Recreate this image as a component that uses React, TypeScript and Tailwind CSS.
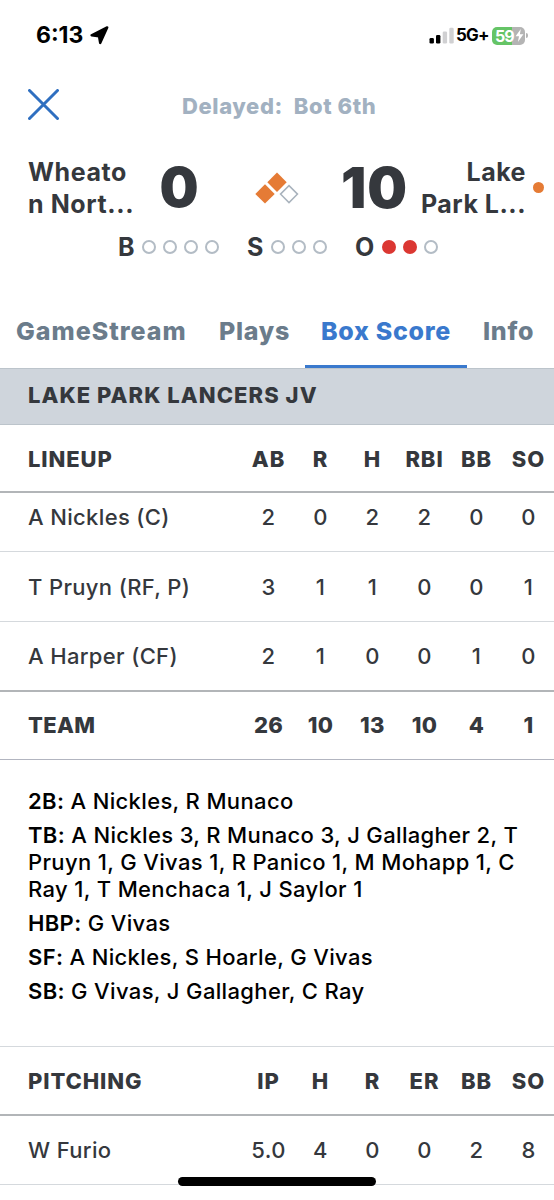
import React from 'react';

interface StatRow {
  name: string;
  stats: string[];
}

interface Note {
  label: string;
  text: string;
}

const battingColumns = ['AB', 'R', 'H', 'RBI', 'BB', 'SO'];

const lineup: StatRow[] = [
  { name: 'A Nickles (C)', stats: ['2', '0', '2', '2', '0', '0'] },
  { name: 'T Pruyn (RF, P)', stats: ['3', '1', '1', '0', '0', '1'] },
  { name: 'A Harper (CF)', stats: ['2', '1', '0', '0', '1', '0'] },
];

const teamTotals = ['26', '10', '13', '10', '4', '1'];

const notes: Note[] = [
  { label: '2B:', text: 'A Nickles, R Munaco' },
  {
    label: 'TB:',
    text: 'A Nickles 3, R Munaco 3, J Gallagher 2, T Pruyn 1, G Vivas 1, R Panico 1, M Mohapp 1, C Ray 1, T Menchaca 1, J Saylor 1',
  },
  { label: 'HBP:', text: 'G Vivas' },
  { label: 'SF:', text: 'A Nickles, S Hoarle, G Vivas' },
  { label: 'SB:', text: 'G Vivas, J Gallagher, C Ray' },
];

const pitchingColumns = ['IP', 'H', 'R', 'ER', 'BB', 'SO'];

const StatusBar = () => (
  <div className="flex h-[71px] items-center justify-between pl-[36px] pr-[26px] text-black">
    <div className="flex items-center gap-[7px]">
      <span className="text-[23px] font-bold leading-none">6:13</span>
      <svg width="19" height="19" viewBox="0 0 19 19">
        <path
          d="M17.2 1.4 L10.2 17 L9 10.2 L1.6 9.2 Z"
          fill="#000"
          stroke="#000"
          strokeWidth="2.4"
          strokeLinejoin="round"
        />
      </svg>
    </div>
    <div className="flex items-center">
      <svg width="26" height="17" viewBox="0 0 26 17">
        <rect x="0.5" y="11" width="4.4" height="5.5" rx="1.3" fill="#000" />
        <rect x="7" y="8" width="4.4" height="8.5" rx="1.3" fill="#000" />
        <rect x="13.7" y="4.5" width="4.4" height="12" rx="1.3" fill="#d0d0d2" />
        <rect x="20.3" y="0.8" width="4.4" height="15.7" rx="1.3" fill="#d0d0d2" />
      </svg>
      <span className="ml-[1px] w-[36px] text-[17px] font-bold leading-none tracking-[-0.8px]">5G+</span>
      <div className="flex h-[18px] w-[33px] items-center overflow-hidden rounded-[5px] bg-linear-to-r from-[#65c466] from-60% to-[#b4b4b4] to-60% pl-[3px]">
        <span className="text-[16px] font-bold leading-none tracking-[-1px] text-white">59</span>
        <svg className="ml-[1px] shrink-0" width="9" height="13" viewBox="0 0 9 13">
          <path d="M5.8 0 L0.6 7.3 H4 L2.9 13 L8.4 5.3 H4.9 Z" fill="#fff" />
        </svg>
      </div>
      <div className="ml-[1px] h-[5px] w-[2px] rounded-r-full bg-[#b4b4b4]" />
    </div>
  </div>
);

const Count = ({ label, total, filled = 0 }: { label: string; total: number; filled?: number }) => (
  <div className="flex items-center">
    <span className={label === 'O' ? 'w-[27px] text-[25px] font-bold leading-none' : 'w-[24px] text-[25px] font-bold leading-none'}>
      {label}
    </span>
    <div className="flex gap-[7px]">
      {Array.from({ length: total }, (_, i) => (
        <span
          key={i}
          className={
            i < filled
              ? 'h-[14px] w-[14px] rounded-full bg-[#db3732]'
              : 'h-[14px] w-[14px] rounded-full border-2 border-[#b3bcc5]'
          }
        />
      ))}
    </div>
  </div>
);

const Bases = () => (
  <svg width="46" height="34" viewBox="0 0 46 34">
    <path d="M22 1.5 L31.7 11.2 L22 20.9 L12.3 11.2 Z" fill="#e57b35" />
    <path d="M10 13.2 L19.7 22.9 L10 32.6 L0.3 22.9 Z" fill="#e57b35" />
    <path d="M34 14.6 L42.5 23.1 L34 31.6 L25.5 23.1 Z" fill="#fff" stroke="#a9b3bd" strokeWidth="1.5" />
  </svg>
);

const Scoreboard = () => (
  <div className="text-[#35383d]">
    <div className="flex h-[97px] items-center">
      <div className="w-[130px] pl-[28px] text-[25px] font-bold leading-[32px] tracking-[0.6px]">
        <div className="whitespace-nowrap">Wheato</div>
        <div className="whitespace-nowrap">n Nort...</div>
      </div>
      <div className="w-[98px] text-center text-[55px] font-black leading-none">0</div>
      <div className="w-[100px] pl-[27px]">
        <Bases />
      </div>
      <div className="w-[92px] pl-px text-center text-[56px] font-black leading-none tracking-[1px]">10</div>
      <div className="w-[106px] whitespace-nowrap text-right text-[25px] font-bold leading-[32px] tracking-[0.5px]">
        <div>Lake</div>
        <div>Park L...</div>
      </div>
      <div className="ml-[7px] h-[11px] w-[11px] rounded-full bg-[#e57b35]" />
    </div>
    <div className="flex h-[21px] items-center gap-[28px] pl-[118px] pt-px">
      <Count label="B" total={4} />
      <Count label="S" total={3} />
      <Count label="O" total={3} filled={2} />
    </div>
  </div>
);

const Tabs = () => (
  <nav className="flex h-[74px] whitespace-nowrap text-[25px] font-extrabold leading-[74px] tracking-[0.7px] text-[#6b7c8b]">
    <div className="w-[202px] pl-[16px] tracking-[1px]">GameStream</div>
    <div className="w-[103px] pl-[17px]">Plays</div>
    <div className="w-[162px] border-b-[3px] border-[#3a79cd] text-center text-[#3a79cd]">Box Score</div>
    <div className="pl-[16px]">Info</div>
  </nav>
);

const StatCells = ({ values }: { values: string[] }) => (
  <>
    {values.map((value, i) => (
      <div key={i} className="w-[52px] pl-px text-center">
        {value}
      </div>
    ))}
  </>
);

const App: React.FC = () => {
  return (
    <div className="relative h-[1200px] w-[554px] overflow-hidden bg-white font-['Inter',sans-serif] text-[22px] text-[#35383d]">
      <StatusBar />

      {/* Title */}
      <div className="flex h-[68px] items-center">
        <svg className="ml-[28px]" width="32" height="32" viewBox="0 0 32 32">
          <path d="M1.5 1.5 L29.5 29.5 M29.5 1.5 L1.5 29.5" stroke="#2f6fc0" strokeWidth="3" strokeLinecap="round" />
        </svg>
        <div className="ml-[122px] whitespace-pre pt-[2px] font-extrabold tracking-[0.6px] text-[#a2b1c1]">Delayed:  Bot 6th</div>
      </div>

      <Scoreboard />

      <div className="h-[37px]" />
      <Tabs />

      {/* Box score */}
      <div className="flex h-[57px] items-center border-y border-[#bcc4cb] bg-[#cfd5dc] pb-[3px] pl-[28px] font-extrabold tracking-[1.05px]">
        LAKE PARK LANCERS JV
      </div>

      <div className="flex h-[68px] items-center border-b-2 border-[#b2b5b8] pl-[28px] pt-[2px] font-extrabold tracking-[0.9px]">
        <div className="flex-1">LINEUP</div>
        <StatCells values={battingColumns} />
      </div>

      <div className="flex h-[199px] flex-col justify-end overflow-hidden">
        {lineup.map((row) => (
          <div
            key={row.name}
            className="flex h-[69.5px] shrink-0 items-center border-b border-[#d5d9dd] pl-[28px] pt-[2px] font-medium tracking-[0.35px] last:h-[70.5px] last:border-b-2 last:border-[#b2b5b8]"
          >
            <div className="flex-1">{row.name}</div>
            <StatCells values={row.stats} />
          </div>
        ))}
      </div>

      <div className="flex h-[68px] items-center border-b border-[#b2b5c0] pl-[28px] font-extrabold tracking-[0.3px]">
        <div className="flex-1">TEAM</div>
        <StatCells values={teamTotals} />
      </div>

      <div className="flex h-[287px] flex-col gap-[7px] border-b border-[#d5d9dd] pl-[28px] pr-[30px] pt-[28px] leading-[27px] tracking-[0.35px] text-black">
        {notes.map((note) => (
          <p key={note.label} className="font-medium">
            <span className="font-semibold">{note.label}</span> {note.text}
          </p>
        ))}
      </div>

      <div className="flex h-[69px] items-center border-b-2 border-[#b2b5b8] pl-[28px] pt-[2px] font-extrabold tracking-[0.9px]">
        <div className="flex-1">PITCHING</div>
        <StatCells values={pitchingColumns} />
      </div>
      <div className="flex h-[69px] items-center border-b border-[#d5d9dd] pl-[28px] font-medium tracking-[0.35px]">
        <div className="flex-1">W Furio</div>
        <StatCells values={['5.0', '4', '0', '0', '2', '8']} />
      </div>

      {/* Home indicator */}
      <div className="absolute left-[178px] top-[1177px] h-[9px] w-[198px] rounded-full bg-black" />
    </div>
  );
};

export default App;
